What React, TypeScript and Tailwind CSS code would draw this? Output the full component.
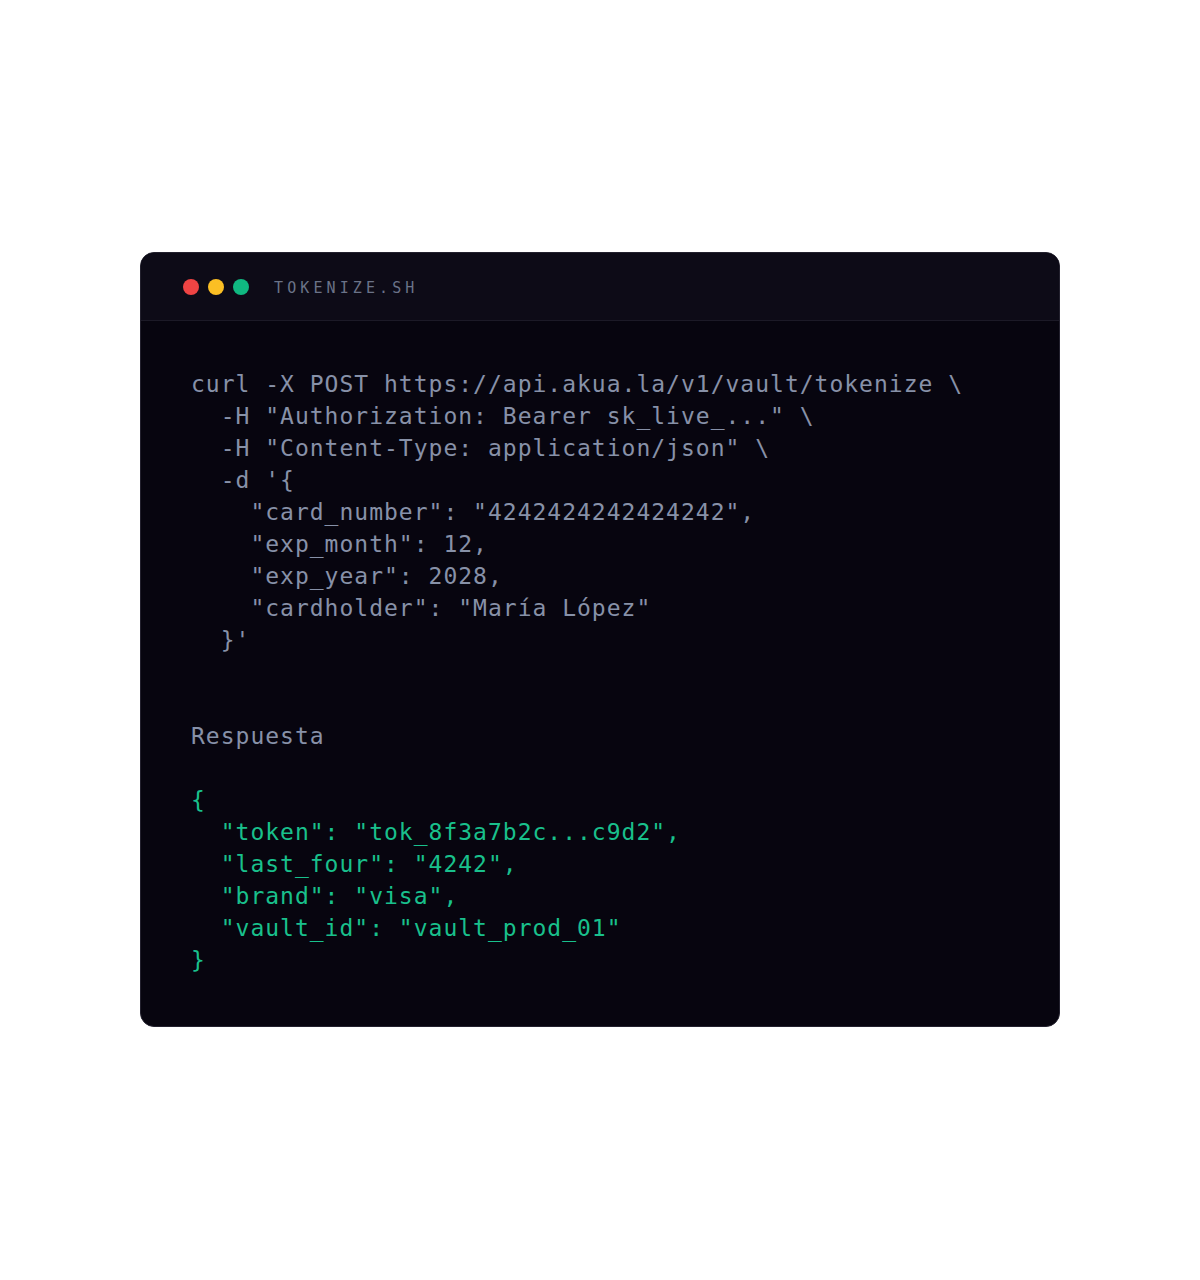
const code = `curl -X POST https://api.akua.la/v1/vault/tokenize \\
  -H "Authorization: Bearer sk_live_..." \\
  -H "Content-Type: application/json" \\
  -d '{
    "card_number": "4242424242424242",
    "exp_month": 12,
    "exp_year": 2028,
    "cardholder": "María López"
  }'`;

const response = `{
  "token": "tok_8f3a7b2c...c9d2",
  "last_four": "4242",
  "brand": "visa",
  "vault_id": "vault_prod_01"
}`;

const mono = "font-['DejaVu_Sans_Mono','Liberation_Mono',monospace]";

export default function App() {
  return (
    <div className="min-h-[1280px] bg-white flex justify-center pt-[252px]">
      <div className="w-[920px] h-[775px] rounded-[14px] border border-[#23212e] bg-[#07050f] overflow-hidden">
        {/* header */}
        <div className="h-[68px] flex items-center pl-[42px] bg-[#0d0b17] border-b border-[#1c1a27]">
          <div className="flex items-center gap-[9px]">
            <span className="w-4 h-4 rounded-full bg-[#ef4444]" />
            <span className="w-4 h-4 rounded-full bg-[#fbbf24]" />
            <span className="w-4 h-4 rounded-full bg-[#10b981]" />
          </div>
          <span className={`${mono} ml-[25px] mt-[3px] text-[15px] tracking-[4.1px] text-[#6b7388]`}>TOKENIZE.SH</span>
        </div>

        {/* body */}
        <div className={`${mono} px-[50px] pt-[47px] text-[23px] leading-[32px] tracking-[1px]`}>
          <pre className="font-[inherit] whitespace-pre text-[#8791a8]">{code}</pre>
          <div className="mt-[64px] text-[#8791a8]">Respuesta</div>
          <pre className="mt-[32px] font-[inherit] whitespace-pre text-[#19c08c]">{response}</pre>
        </div>
      </div>
    </div>
  );
}
